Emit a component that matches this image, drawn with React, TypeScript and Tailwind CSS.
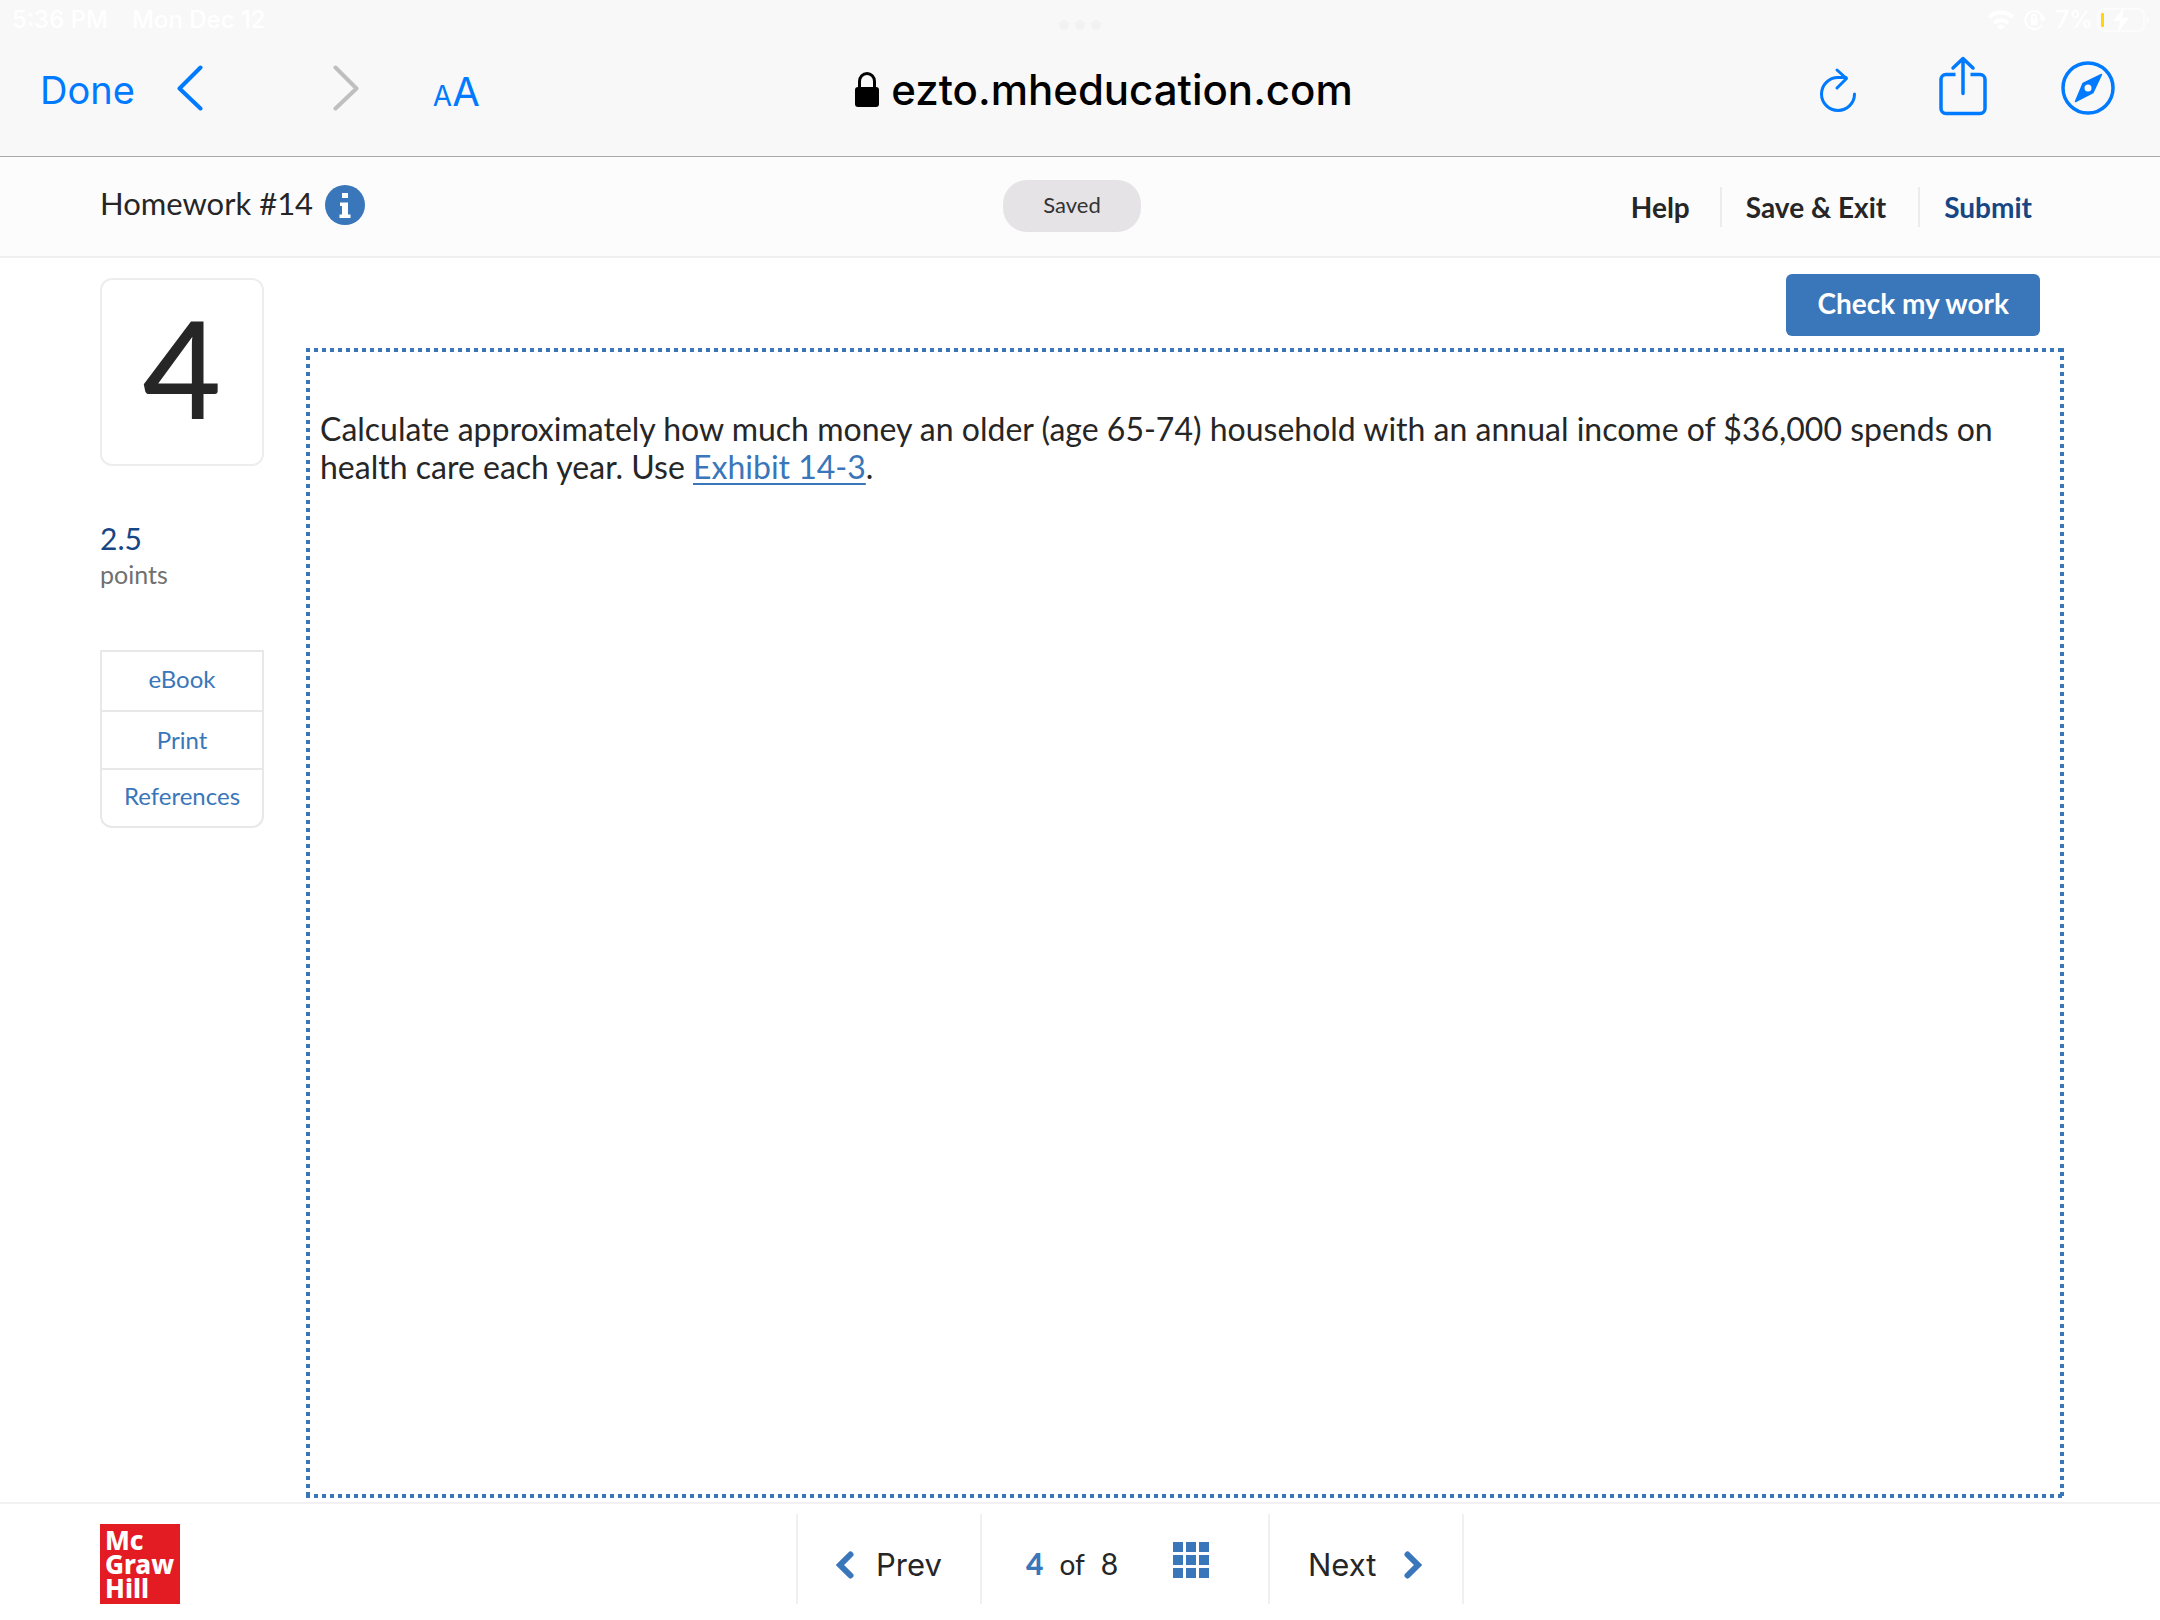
import React from 'react';

const DOC_FONT = "font-['Lato','Open_Sans',sans-serif]";
const SYSTEM_FONT = "font-['Inter','Liberation_Sans',sans-serif]";

const RESOURCES = [
  { label: 'eBook', row: 'h-[58px] pb-1' },
  { label: 'Print', row: 'h-[58px] border-t-2' },
  { label: 'References', row: 'h-[58px] border-t-2 pb-1' },
];

const GRID_CELLS = [0, 13, 26];

const StatusBar: React.FC = () => (
  <div className="relative flex h-9 items-start justify-between pt-1 pl-3 pr-[11px] text-2xl leading-8 font-medium text-white">
    <div className="flex gap-6">
      <span>5:36 PM</span>
      <span>Mon Dec 12</span>
    </div>
    <div className="absolute left-1/2 top-5 flex -translate-x-1/2 gap-[6px]">
      {[0, 1, 2].map(i => (
        <span key={i} className="size-[10px] rounded-full bg-[#f2f2f2]" />
      ))}
    </div>
    <div className="flex items-center">
      <svg width="28" height="22" viewBox="0 0 28 22" fill="none" stroke="currentColor" strokeWidth="4">
        <path d="M2 8.5a17 17 0 0 1 24 0" />
        <path d="M7 14a10 10 0 0 1 14 0" />
        <path d="M14 21l-4-4a6 6 0 0 1 8 0z" fill="currentColor" stroke="none" />
      </svg>
      <svg className="ml-2" width="24" height="22" viewBox="0 0 24 22" fill="none" stroke="currentColor" strokeWidth="2">
        <path d="M18.5 16.5A9 9 0 1 1 20 9" />
        <path d="M16 8h7l-3 5z" fill="currentColor" stroke="none" />
        <path d="M7.500 10h7v6h-7z" fill="currentColor" stroke="none" />
        <path d="M9 10V8a2 2 0 0 1 4 0v2" />
      </svg>
      <span className="ml-2">7%</span>
      <svg className="ml-1" width="52" height="26" viewBox="0 0 52 26">
        <rect x="1" y="2" width="46" height="22" rx="6" fill="none" stroke="#fcfcfc" strokeWidth="2" />
        <path d="M49 9.500q3 1 3 3.500t-3 3.500z" fill="#fcfcfc" />
        <rect x="4" y="6" width="3" height="14" rx="1" fill="#ffd60a" />
        <path d="M27 1L16 14h7l-2 11 11-14h-7z" fill="#fff" />
      </svg>
    </div>
  </div>
);

const BrowserBar: React.FC = () => (
  <header className={`border-b border-[#aaa] bg-[#f8f8f8] ${SYSTEM_FONT}`}>
    <StatusBar />
    <div className="grid h-[120px] grid-cols-[1fr_auto_1fr] items-start pt-6 pl-10 text-[#007aff]">
      <div className="flex h-14 items-center">
        <button className="pt-1 text-[38px] leading-14">Done</button>
        <button aria-label="Back" className="ml-[42px]">
          <svg width="26" height="46" viewBox="0 0 26 46" fill="none" stroke="currentColor" strokeWidth="4" strokeLinecap="round" strokeLinejoin="round">
            <path d="M23.500 2.500L2.500 23.500l21 20" />
          </svg>
        </button>
        <button aria-label="Forward" className="ml-[130px] text-[#bfbfbf]" disabled>
          <svg width="26" height="46" viewBox="0 0 26 46" fill="none" stroke="currentColor" strokeWidth="4" strokeLinecap="round" strokeLinejoin="round">
            <path d="M2.500 2.500l21 21-21 20" />
          </svg>
        </button>
        <button className="ml-[74px] flex items-baseline pt-3 text-[40px] leading-14">
          <span className="text-[28px]">A</span>
          <span>A</span>
        </button>
      </div>
      <div className="flex h-14 items-center gap-3 pt-1 pl-2 text-black">
        <svg width="24" height="36" viewBox="0 0 24 36">
          <path d="M4.500 17V9.500a7.500 8 0 0 1 15 0V17" fill="none" stroke="currentColor" strokeWidth="3" />
          <rect x="0" y="15" width="24" height="20" rx="3" fill="currentColor" />
        </svg>
        <span className="text-[42px] leading-14 font-medium">ezto.mheducation.com</span>
      </div>
      <div className="flex h-14 items-center justify-end pr-[45px]">
        <button aria-label="Reload" className="pt-1">
          <svg width="38" height="48" viewBox="0 0 38 48" fill="none" stroke="currentColor" strokeWidth="3" strokeLinecap="round" strokeLinejoin="round">
            <path d="M35.500 28a16.500 16.500 0 1 1-16.500-16.500h8" />
            <path d="M18 4l9.500 8.500-9.500 9.500" />
          </svg>
        </button>
        <button aria-label="Share" className="ml-[82px] pb-1">
          <svg width="48" height="60" viewBox="0 0 48 60" fill="none" stroke="currentColor" strokeWidth="3.500">
            <path d="M16.500 18.500H7a5 5 0 0 0-5 5v29a5 5 0 0 0 5 5h34a5 5 0 0 0 5-5v-29a5 5 0 0 0-5-5h-9.500" />
            <path d="M24 37.500V3M14 12L24 2.500 34 12" strokeLinecap="round" strokeLinejoin="round" />
          </svg>
        </button>
        <button aria-label="Open in Safari" className="ml-[74px]">
          <svg width="54" height="54" viewBox="0 0 54 54">
            <circle cx="27" cy="27" r="25" fill="none" stroke="currentColor" strokeWidth="3.500" />
            <path d="M40.500 13.500L32 31.500 14.500 40.500 22 22.500z" fill="currentColor" stroke="currentColor" strokeWidth="1.500" strokeLinejoin="round" />
            <circle cx="27" cy="27" r="3.500" fill="#f8f8f8" />
          </svg>
        </button>
      </div>
    </div>
  </header>
);

const AssignmentBar: React.FC = () => (
  <div className="grid h-[101px] grid-cols-[1fr_auto_1fr] items-center border-b-2 border-[#efefef] bg-[#fcfcfc] pl-[100px] pr-[116px]">
    <div className="flex items-center gap-3 pb-1">
      <h1 className="pb-1 text-[31px] leading-10">Homework #14</h1>
      <button aria-label="Assignment info">
        <svg width="40" height="40" viewBox="0 0 40 40">
          <circle cx="20" cy="20" r="20" fill="#3976ba" />
          <path d="M17 8h6v5h-6zM15 17.500h8v12h2.500v3.500h-11v-3.500H17v-8.500h-2z" fill="#fff" />
        </svg>
      </button>
    </div>
    <span className="mb-[2px] rounded-3xl bg-[#e5e3e6] px-10 pb-[2px] text-[22px] leading-[50px] text-[#333]">Saved</span>
    <nav className="flex items-center justify-end text-[28px] leading-10 font-bold">
      <button className="pr-[30px]">Help</button>
      <button className="border-l-2 border-[#ececec] pl-6 pr-8">Save &amp; Exit</button>
      <button className="border-l-2 border-[#ececec] pl-6 pr-3 text-[#164684]">Submit</button>
    </nav>
  </div>
);

const Sidebar: React.FC = () => (
  <aside className="w-[164px] shrink-0 pt-5">
    <div className="flex h-[188px] items-center justify-center rounded-xl border-2 border-[#ededed] pb-[10px] text-[136px] leading-none font-medium">
      4
    </div>
    <p className="mt-[52px] text-[30px] leading-10 text-[#164684]">2.5</p>
    <p className="text-[25px] leading-8 text-[#707070]">points</p>
    <div className="mt-[60px] flex flex-col rounded-b-xl border-2 border-[#e8e8e8] text-2xl text-[#3976ba]">
      {RESOURCES.map(({ label, row }) => (
        <button key={label} className={`border-[#e8e8e8] ${row}`}>
          {label}
        </button>
      ))}
    </div>
  </aside>
);

const Question: React.FC = () => (
  <section className="flex flex-1 flex-col pt-4">
    <button className="mr-6 self-end rounded-md bg-[#3976ba] px-[31px] pb-1 text-[28px] leading-[58px] font-bold text-white">
      Check my work
    </button>
    {/* square dots along all four edges */}
    <div className="mt-3 flex-1 bg-[repeating-linear-gradient(90deg,#3976ba_0_4px,transparent_4px_8px),repeating-linear-gradient(90deg,#3976ba_0_4px,transparent_4px_8px),repeating-linear-gradient(180deg,#3976ba_0_4px,transparent_4px_8px),repeating-linear-gradient(180deg,#3976ba_0_4px,transparent_4px_8px)] bg-[position:0_0,0_100%,0_0,100%_0] bg-[size:100%_4px,100%_4px,4px_100%,4px_100%] bg-no-repeat px-[14px] pt-[62px]">
      <p className="text-[32px] leading-[38px]">
        Calculate approximately how much money an older (age 65-74) household with an annual income of $36,000 spends on
        health care each year. Use{' '}
        <a href="#exhibit-14-3" className="text-[#3976ba] underline decoration-2 underline-offset-4">
          Exhibit 14-3
        </a>
        .
      </p>
    </div>
  </section>
);

const Footer: React.FC = () => (
  <footer className="grid h-[118px] grid-cols-[1fr_auto_1fr] items-start border-t-2 border-[#f1f1f1] pl-[100px] pt-[10px]">
    <div className="mt-[10px] size-20 bg-[#e31b23] pt-1 pl-[5px] font-['Noto_Sans',sans-serif] text-[26px] leading-6 font-extrabold text-white">
      <div>Mc</div>
      <div>Graw</div>
      <div>Hill</div>
    </div>
    <nav className="flex h-[90px] border-r-2 border-[#f0f0f0]">
      <button className={`flex w-[184px] items-center gap-[22px] border-l-2 border-[#f0f0f0] pt-3 pl-[38px] text-[31px] ${SYSTEM_FONT}`}>
        <svg width="18" height="28" viewBox="0 0 18 28" fill="none" stroke="#3976ba" strokeWidth="6" strokeLinecap="round">
          <path d="M14.500 3.500L4 14l10.500 10.500" />
        </svg>
        Prev
      </button>
      <div className="flex w-[288px] items-center border-l-2 border-[#f0f0f0] pl-11">
        <div className="flex items-baseline gap-4 pt-2">
          <span className="text-[30px] font-black text-[#3976ba]">4</span>
          <span className="text-[28px]">of</span>
          <span className="text-[30px]">8</span>
        </div>
        <button aria-label="Question list" className="ml-auto mr-[59px] pt-[2px]">
          <svg width="36" height="36" viewBox="0 0 36 36" fill="#3976ba">
            {GRID_CELLS.map(y => GRID_CELLS.map(x => <rect key={`${x}-${y}`} x={x} y={y} width="10" height="10" />))}
          </svg>
        </button>
      </div>
      <button className={`flex w-[194px] items-center gap-7 border-l-2 border-[#f0f0f0] pt-3 pl-[38px] text-[31px] ${SYSTEM_FONT}`}>
        Next
        <svg width="18" height="28" viewBox="0 0 18 28" fill="none" stroke="#3976ba" strokeWidth="6" strokeLinecap="round">
          <path d="M3.500 3.500L14 14 3.500 24.500" />
        </svg>
      </button>
    </nav>
  </footer>
);

export default function App() {
  return (
    <div className={`flex min-h-screen flex-col bg-white text-[#262626] ${DOC_FONT}`}>
      <BrowserBar />
      <AssignmentBar />
      <main className="flex flex-1 gap-[42px] pl-[100px] pr-24 pb-1">
        <Sidebar />
        <Question />
      </main>
      <Footer />
    </div>
  );
}
